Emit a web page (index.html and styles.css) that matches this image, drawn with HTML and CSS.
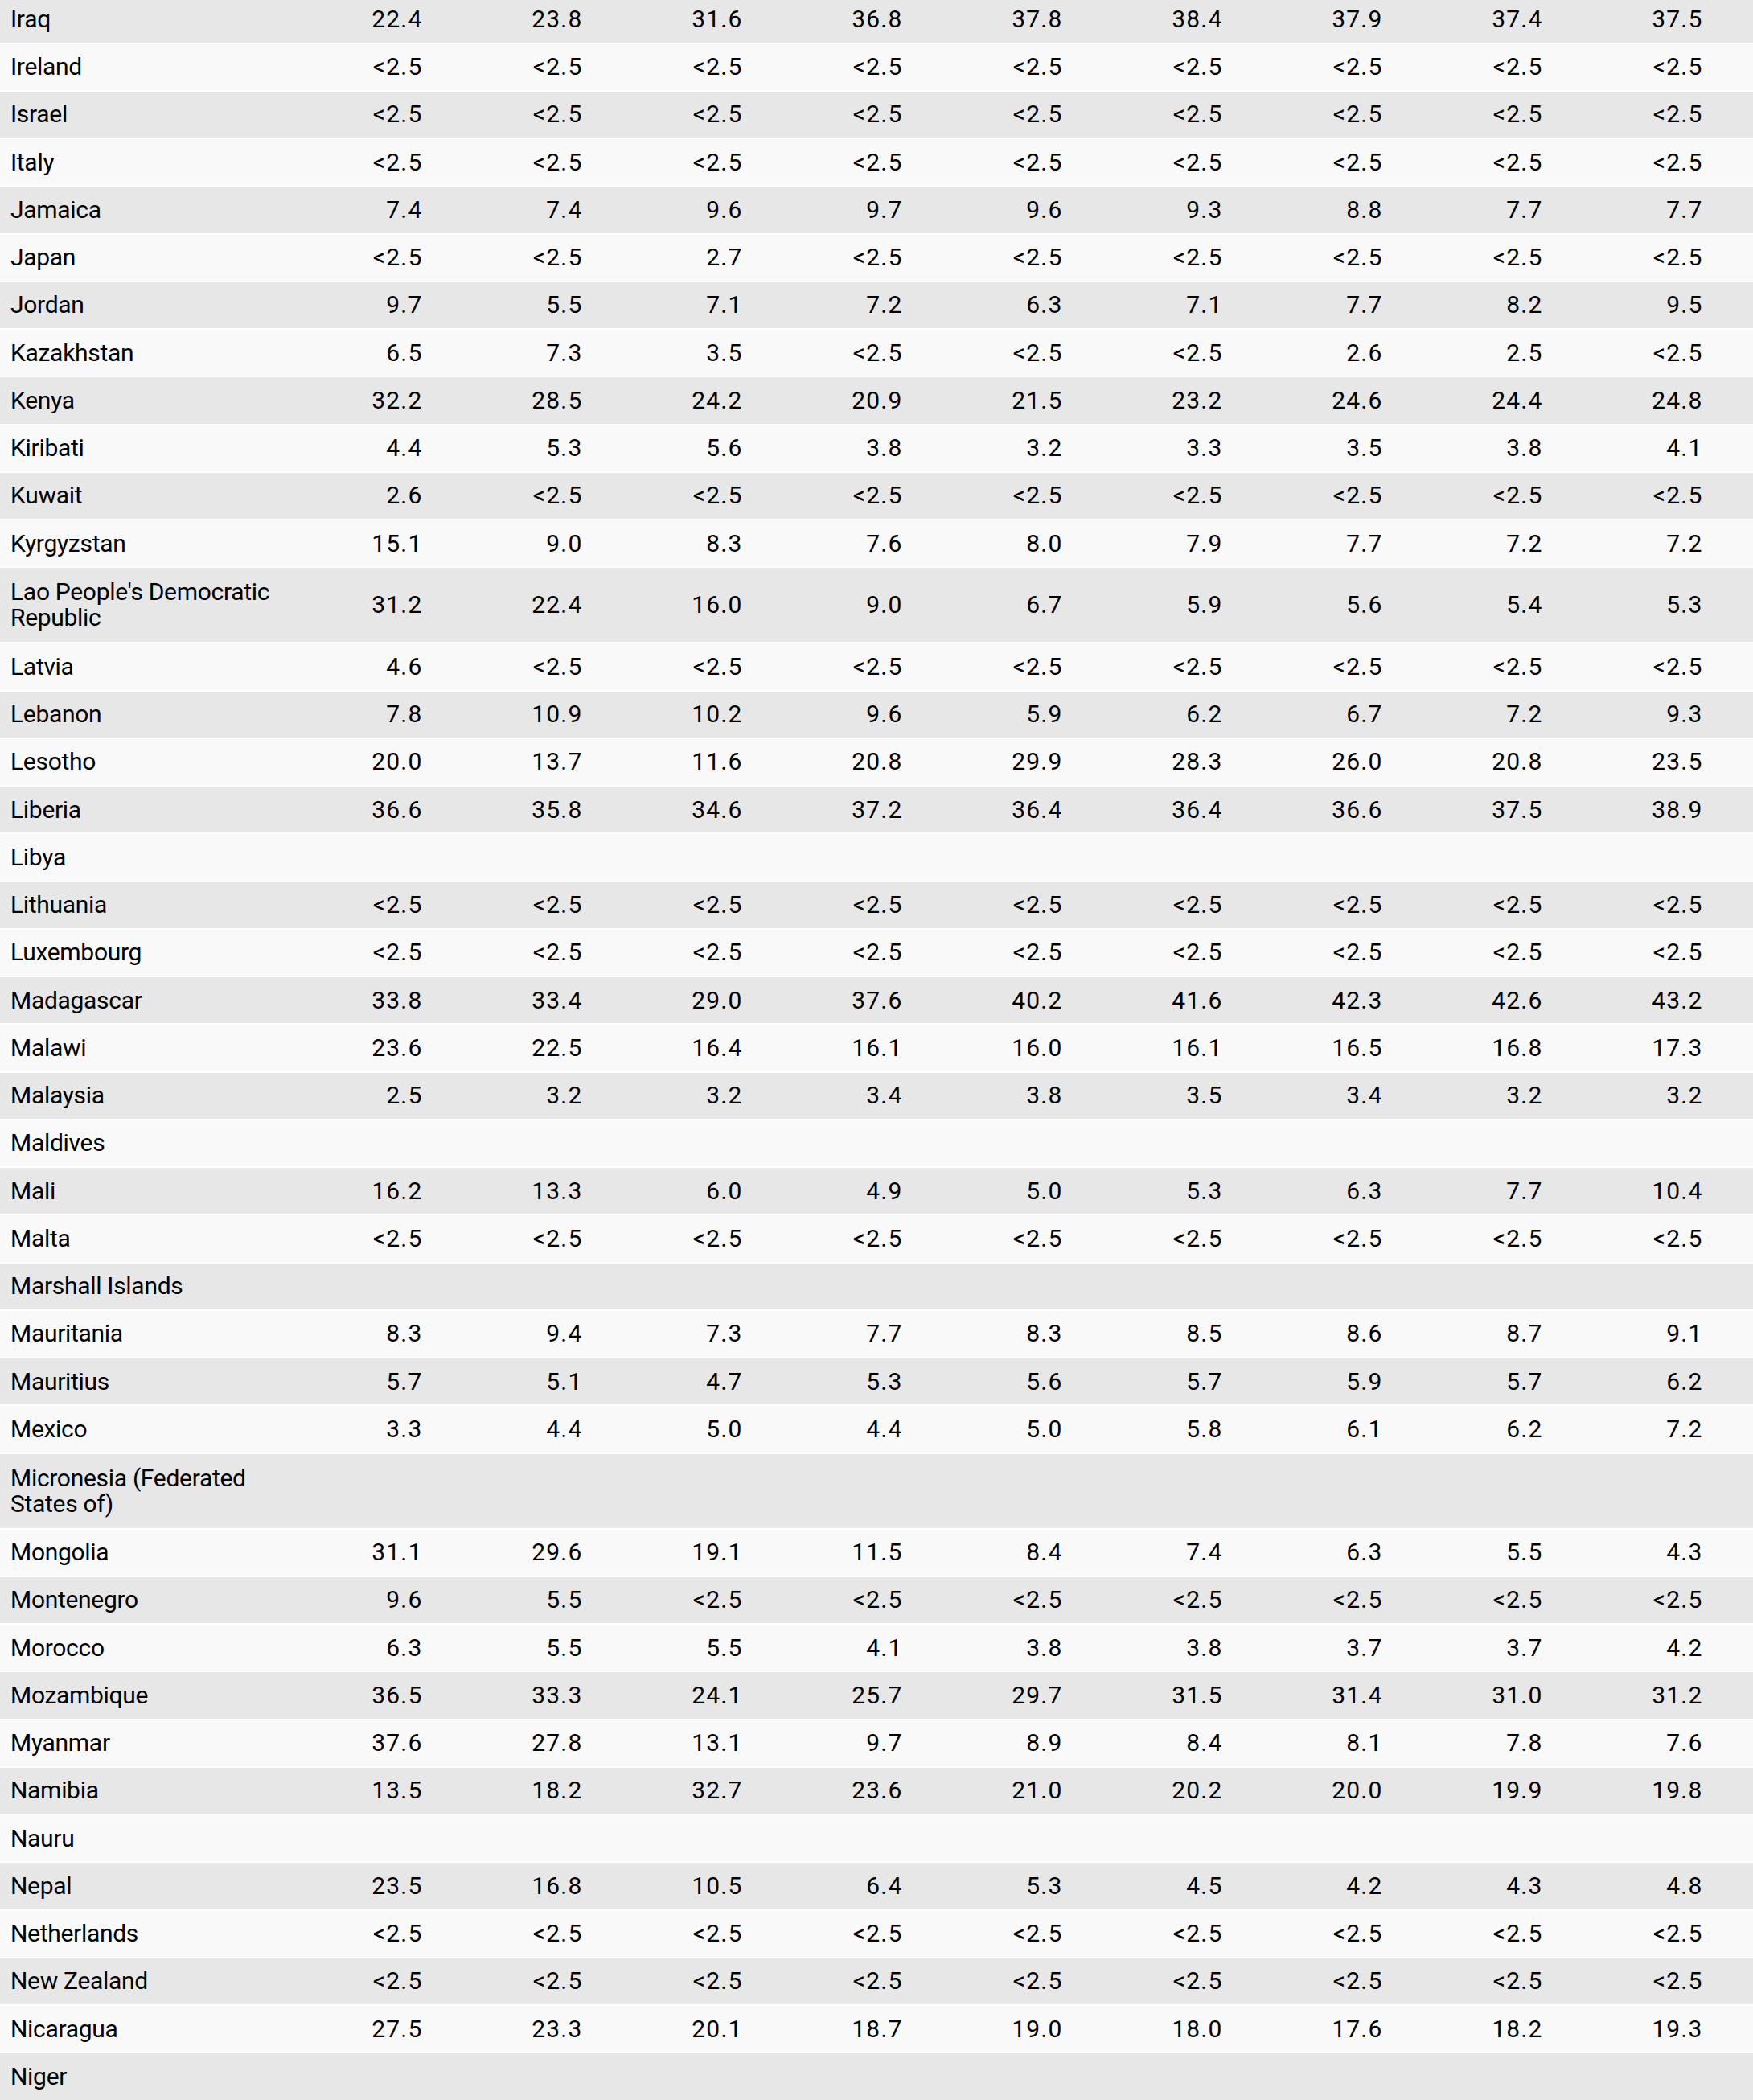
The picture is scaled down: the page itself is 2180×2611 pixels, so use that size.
FILE: index.html
```html
<!DOCTYPE html>
<html lang="en">
<head>
<meta charset="utf-8">
<title>Table</title>
<link rel="stylesheet" href="styles.css">
</head>
<body>
<table class="data">
<colgroup><col class="c-name"><col class="c-num"><col class="c-num"><col class="c-num"><col class="c-num"><col class="c-num"><col class="c-num"><col class="c-num"><col class="c-num"><col class="c-num"></colgroup>
<tbody>
<tr><td class="name">Iraq</td><td>22.4</td><td>23.8</td><td>31.6</td><td>36.8</td><td>37.8</td><td>38.4</td><td>37.9</td><td>37.4</td><td>37.5</td></tr>
<tr><td class="name">Ireland</td><td>&lt;2.5</td><td>&lt;2.5</td><td>&lt;2.5</td><td>&lt;2.5</td><td>&lt;2.5</td><td>&lt;2.5</td><td>&lt;2.5</td><td>&lt;2.5</td><td>&lt;2.5</td></tr>
<tr><td class="name">Israel</td><td>&lt;2.5</td><td>&lt;2.5</td><td>&lt;2.5</td><td>&lt;2.5</td><td>&lt;2.5</td><td>&lt;2.5</td><td>&lt;2.5</td><td>&lt;2.5</td><td>&lt;2.5</td></tr>
<tr><td class="name">Italy</td><td>&lt;2.5</td><td>&lt;2.5</td><td>&lt;2.5</td><td>&lt;2.5</td><td>&lt;2.5</td><td>&lt;2.5</td><td>&lt;2.5</td><td>&lt;2.5</td><td>&lt;2.5</td></tr>
<tr><td class="name">Jamaica</td><td>7.4</td><td>7.4</td><td>9.6</td><td>9.7</td><td>9.6</td><td>9.3</td><td>8.8</td><td>7.7</td><td>7.7</td></tr>
<tr><td class="name">Japan</td><td>&lt;2.5</td><td>&lt;2.5</td><td>2.7</td><td>&lt;2.5</td><td>&lt;2.5</td><td>&lt;2.5</td><td>&lt;2.5</td><td>&lt;2.5</td><td>&lt;2.5</td></tr>
<tr><td class="name">Jordan</td><td>9.7</td><td>5.5</td><td>7.1</td><td>7.2</td><td>6.3</td><td>7.1</td><td>7.7</td><td>8.2</td><td>9.5</td></tr>
<tr><td class="name">Kazakhstan</td><td>6.5</td><td>7.3</td><td>3.5</td><td>&lt;2.5</td><td>&lt;2.5</td><td>&lt;2.5</td><td>2.6</td><td>2.5</td><td>&lt;2.5</td></tr>
<tr><td class="name">Kenya</td><td>32.2</td><td>28.5</td><td>24.2</td><td>20.9</td><td>21.5</td><td>23.2</td><td>24.6</td><td>24.4</td><td>24.8</td></tr>
<tr><td class="name">Kiribati</td><td>4.4</td><td>5.3</td><td>5.6</td><td>3.8</td><td>3.2</td><td>3.3</td><td>3.5</td><td>3.8</td><td>4.1</td></tr>
<tr><td class="name">Kuwait</td><td>2.6</td><td>&lt;2.5</td><td>&lt;2.5</td><td>&lt;2.5</td><td>&lt;2.5</td><td>&lt;2.5</td><td>&lt;2.5</td><td>&lt;2.5</td><td>&lt;2.5</td></tr>
<tr><td class="name">Kyrgyzstan</td><td>15.1</td><td>9.0</td><td>8.3</td><td>7.6</td><td>8.0</td><td>7.9</td><td>7.7</td><td>7.2</td><td>7.2</td></tr>
<tr class="tall"><td class="name">Lao People's Democratic Republic</td><td>31.2</td><td>22.4</td><td>16.0</td><td>9.0</td><td>6.7</td><td>5.9</td><td>5.6</td><td>5.4</td><td>5.3</td></tr>
<tr><td class="name">Latvia</td><td>4.6</td><td>&lt;2.5</td><td>&lt;2.5</td><td>&lt;2.5</td><td>&lt;2.5</td><td>&lt;2.5</td><td>&lt;2.5</td><td>&lt;2.5</td><td>&lt;2.5</td></tr>
<tr><td class="name">Lebanon</td><td>7.8</td><td>10.9</td><td>10.2</td><td>9.6</td><td>5.9</td><td>6.2</td><td>6.7</td><td>7.2</td><td>9.3</td></tr>
<tr><td class="name">Lesotho</td><td>20.0</td><td>13.7</td><td>11.6</td><td>20.8</td><td>29.9</td><td>28.3</td><td>26.0</td><td>20.8</td><td>23.5</td></tr>
<tr><td class="name">Liberia</td><td>36.6</td><td>35.8</td><td>34.6</td><td>37.2</td><td>36.4</td><td>36.4</td><td>36.6</td><td>37.5</td><td>38.9</td></tr>
<tr><td class="name">Libya</td><td></td><td></td><td></td><td></td><td></td><td></td><td></td><td></td><td></td></tr>
<tr><td class="name">Lithuania</td><td>&lt;2.5</td><td>&lt;2.5</td><td>&lt;2.5</td><td>&lt;2.5</td><td>&lt;2.5</td><td>&lt;2.5</td><td>&lt;2.5</td><td>&lt;2.5</td><td>&lt;2.5</td></tr>
<tr><td class="name">Luxembourg</td><td>&lt;2.5</td><td>&lt;2.5</td><td>&lt;2.5</td><td>&lt;2.5</td><td>&lt;2.5</td><td>&lt;2.5</td><td>&lt;2.5</td><td>&lt;2.5</td><td>&lt;2.5</td></tr>
<tr><td class="name">Madagascar</td><td>33.8</td><td>33.4</td><td>29.0</td><td>37.6</td><td>40.2</td><td>41.6</td><td>42.3</td><td>42.6</td><td>43.2</td></tr>
<tr><td class="name">Malawi</td><td>23.6</td><td>22.5</td><td>16.4</td><td>16.1</td><td>16.0</td><td>16.1</td><td>16.5</td><td>16.8</td><td>17.3</td></tr>
<tr><td class="name">Malaysia</td><td>2.5</td><td>3.2</td><td>3.2</td><td>3.4</td><td>3.8</td><td>3.5</td><td>3.4</td><td>3.2</td><td>3.2</td></tr>
<tr><td class="name">Maldives</td><td></td><td></td><td></td><td></td><td></td><td></td><td></td><td></td><td></td></tr>
<tr><td class="name">Mali</td><td>16.2</td><td>13.3</td><td>6.0</td><td>4.9</td><td>5.0</td><td>5.3</td><td>6.3</td><td>7.7</td><td>10.4</td></tr>
<tr><td class="name">Malta</td><td>&lt;2.5</td><td>&lt;2.5</td><td>&lt;2.5</td><td>&lt;2.5</td><td>&lt;2.5</td><td>&lt;2.5</td><td>&lt;2.5</td><td>&lt;2.5</td><td>&lt;2.5</td></tr>
<tr><td class="name">Marshall Islands</td><td></td><td></td><td></td><td></td><td></td><td></td><td></td><td></td><td></td></tr>
<tr><td class="name">Mauritania</td><td>8.3</td><td>9.4</td><td>7.3</td><td>7.7</td><td>8.3</td><td>8.5</td><td>8.6</td><td>8.7</td><td>9.1</td></tr>
<tr><td class="name">Mauritius</td><td>5.7</td><td>5.1</td><td>4.7</td><td>5.3</td><td>5.6</td><td>5.7</td><td>5.9</td><td>5.7</td><td>6.2</td></tr>
<tr><td class="name">Mexico</td><td>3.3</td><td>4.4</td><td>5.0</td><td>4.4</td><td>5.0</td><td>5.8</td><td>6.1</td><td>6.2</td><td>7.2</td></tr>
<tr class="tall"><td class="name">Micronesia (Federated States of)</td><td></td><td></td><td></td><td></td><td></td><td></td><td></td><td></td><td></td></tr>
<tr><td class="name">Mongolia</td><td>31.1</td><td>29.6</td><td>19.1</td><td>11.5</td><td>8.4</td><td>7.4</td><td>6.3</td><td>5.5</td><td>4.3</td></tr>
<tr><td class="name">Montenegro</td><td>9.6</td><td>5.5</td><td>&lt;2.5</td><td>&lt;2.5</td><td>&lt;2.5</td><td>&lt;2.5</td><td>&lt;2.5</td><td>&lt;2.5</td><td>&lt;2.5</td></tr>
<tr><td class="name">Morocco</td><td>6.3</td><td>5.5</td><td>5.5</td><td>4.1</td><td>3.8</td><td>3.8</td><td>3.7</td><td>3.7</td><td>4.2</td></tr>
<tr><td class="name">Mozambique</td><td>36.5</td><td>33.3</td><td>24.1</td><td>25.7</td><td>29.7</td><td>31.5</td><td>31.4</td><td>31.0</td><td>31.2</td></tr>
<tr><td class="name">Myanmar</td><td>37.6</td><td>27.8</td><td>13.1</td><td>9.7</td><td>8.9</td><td>8.4</td><td>8.1</td><td>7.8</td><td>7.6</td></tr>
<tr><td class="name">Namibia</td><td>13.5</td><td>18.2</td><td>32.7</td><td>23.6</td><td>21.0</td><td>20.2</td><td>20.0</td><td>19.9</td><td>19.8</td></tr>
<tr><td class="name">Nauru</td><td></td><td></td><td></td><td></td><td></td><td></td><td></td><td></td><td></td></tr>
<tr><td class="name">Nepal</td><td>23.5</td><td>16.8</td><td>10.5</td><td>6.4</td><td>5.3</td><td>4.5</td><td>4.2</td><td>4.3</td><td>4.8</td></tr>
<tr><td class="name">Netherlands</td><td>&lt;2.5</td><td>&lt;2.5</td><td>&lt;2.5</td><td>&lt;2.5</td><td>&lt;2.5</td><td>&lt;2.5</td><td>&lt;2.5</td><td>&lt;2.5</td><td>&lt;2.5</td></tr>
<tr><td class="name">New Zealand</td><td>&lt;2.5</td><td>&lt;2.5</td><td>&lt;2.5</td><td>&lt;2.5</td><td>&lt;2.5</td><td>&lt;2.5</td><td>&lt;2.5</td><td>&lt;2.5</td><td>&lt;2.5</td></tr>
<tr><td class="name">Nicaragua</td><td>27.5</td><td>23.3</td><td>20.1</td><td>18.7</td><td>19.0</td><td>18.0</td><td>17.6</td><td>18.2</td><td>19.3</td></tr>
<tr><td class="name">Niger</td><td></td><td></td><td></td><td></td><td></td><td></td><td></td><td></td><td></td></tr>
</tbody>
</table>
</body>
</html>
```
FILE: styles.css
```css
html, body {
  margin: 0;
  padding: 0;
  background: #ffffff;
}

body {
  font-family: Roboto, "Liberation Sans", sans-serif;
  font-size: 30px;
  font-weight: 400;
  color: #000000;
  overflow: hidden;
}

.data {
  width: 2180px;
  table-layout: fixed;
  border-collapse: separate;
  border-spacing: 0 2px;
  margin-top: -6.75px;
}

.c-name { width: 389px; }
.c-num { width: 199px; }

.data td {
  height: 57.25px;
  padding: 0 62.5px 0 0;
  line-height: 32px;
  text-align: right;
  vertical-align: middle;
  white-space: nowrap;
  letter-spacing: 1.2px;
}

.data td.name {
  padding: 0 40px 0 13px;
  text-align: left;
  white-space: normal;
  letter-spacing: -0.3px;
}

.data tr.tall td {
  height: 92px;
}

.data tr:nth-child(odd) td { background: #e7e7e7; }
.data tr:nth-child(even) td { background: #f9f9f9; }
```
